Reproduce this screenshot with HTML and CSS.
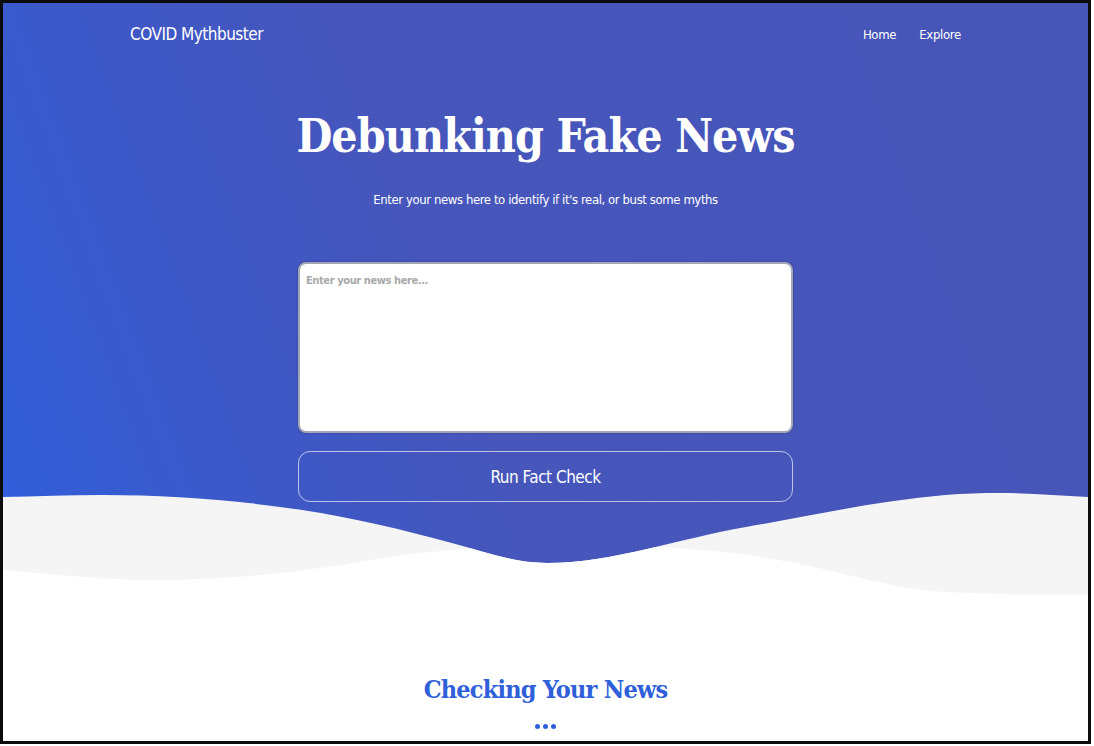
FILE: index.html
```html
<!DOCTYPE html>
<html lang="en">
<head>
<meta charset="utf-8">
<title>COVID Mythbuster</title>
<link rel="stylesheet" href="styles.css">
</head>
<body>
<div class="frame">
  <header class="hero">
    <nav class="nav">
      <a class="brand" href="#">COVID Mythbuster</a>
      <div class="links">
        <a href="#">Home</a>
        <a href="#">Explore</a>
      </div>
    </nav>
    <h1 class="title">Debunking Fake News</h1>
    <p class="subtitle">Enter your news here to identify if it's real, or bust some myths</p>
    <textarea class="news" placeholder="Enter your news here..."></textarea>
    <button class="run">Run Fact Check</button>
    <svg class="wave" viewBox="0 0 1088 110" preserveAspectRatio="none" aria-hidden="true">
      <defs>
        <clipPath id="belowBlue">
          <path d="M0,7 C33.3,6.3 66.7,5 100,5 C166.7,5 233.3,10 300,20 C350,27.5 400,39.5 450,53 C481.7,61.6 513.3,73 545,73 C611.7,73 678.3,48.3 745,37 C811.7,25.7 878.3,10.3 945,5 C963.3,3.5 981.7,3 1000,3 C1029.3,3 1058.7,5.5 1088,7 L1088,110 L0,110 Z"/>
        </clipPath>
      </defs>
      <path fill="#f5f5f5" d="M0,7 C33.3,6.3 66.7,5 100,5 C166.7,5 233.3,10 300,20 C350,27.5 400,39.5 450,53 C481.7,61.6 513.3,73 545,73 C611.7,73 678.3,48.3 745,37 C811.7,25.7 878.3,10.3 945,5 C963.3,3.5 981.7,3 1000,3 C1029.3,3 1058.7,5.5 1088,7 L1088,110 L0,110 Z"/>
      <path fill="#ffffff" clip-path="url(#belowBlue)" d="M0,80 C50,84 100,90 150,90 C216.7,90 283.3,84.3 350,73 C419,61.3 488,55 557,55 C636,55 715,57.2 794,73 C844,83 894,98.5 944,102 C992,104.5 1040,105 1088,105 L1088,110 L0,110 Z"/>
    </svg>
  </header>
  <section class="checking">
    <h2 class="checking-title">Checking Your News</h2>
    <div class="dots"><span></span><span></span><span></span></div>
  </section>
</div>
</body>
</html>
```

FILE: styles.css
```css
html, body {
  margin: 0;
  padding: 0;
  background: #ffffff;
}

.frame {
  width: 1085px;
  height: 738px;
  border: 3px solid #0b0b0b;
  overflow: hidden;
  background: #ffffff;
  font-family: "DejaVu Sans Condensed", "DejaVu Sans", sans-serif;
}

.hero {
  position: relative;
  height: 597px;
  display: flex;
  flex-direction: column;
  align-items: center;
  background: linear-gradient(70deg, #2f5fdc 0%, #3d58c8 22%, #4656bb 42%, #4755b8 100%);
  color: #ffffff;
}

.nav {
  width: 831px;
  height: 62px;
  display: flex;
  align-items: center;
  justify-content: space-between;
}

.nav a {
  color: #ffffff;
  text-decoration: none;
}

.brand {
  font-size: 17px;
  letter-spacing: -0.5px;
}

.links {
  display: flex;
  gap: 23px;
  font-size: 13px;
  letter-spacing: -0.3px;
}

.title {
  margin: 39px 0 0;
  font-family: "DejaVu Serif Condensed", "DejaVu Serif", serif;
  font-weight: bold;
  font-size: 46px;
  line-height: 64px;
  letter-spacing: -0.9px;
}

.subtitle {
  margin: 22px 0 0;
  font-size: 13px;
  line-height: 20px;
  letter-spacing: -0.4px;
}

.news {
  margin-top: 52px;
  box-sizing: border-box;
  width: 495px;
  height: 171px;
  padding: 10px 6px;
  border: 2px solid #a3a6b6;
  border-radius: 8px;
  background: #ffffff;
  box-shadow: 0 0 2px rgba(0, 0, 0, 0.35);
  resize: none;
  font-family: inherit;
  font-size: 11px;
  font-weight: bold;
  letter-spacing: -0.4px;
  color: #333;
  outline: none;
}

.news::placeholder {
  color: #a9a9a9;
}

.run {
  margin-top: 18px;
  box-sizing: border-box;
  width: 495px;
  height: 51px;
  border: 1px solid rgba(255, 255, 255, 0.65);
  border-radius: 12px;
  background: transparent;
  color: #ffffff;
  font-family: inherit;
  font-size: 17px;
  letter-spacing: -0.5px;
  cursor: pointer;
}

.wave {
  position: absolute;
  left: 0;
  bottom: 0;
  width: 100%;
  height: 110px;
  display: block;
}

.checking {
  display: flex;
  flex-direction: column;
  align-items: center;
  padding-top: 72px;
}

.checking-title {
  margin: 0;
  font-family: "DejaVu Serif Condensed", "DejaVu Serif", serif;
  font-weight: bold;
  font-size: 25px;
  line-height: 36px;
  color: #2f60da;
  letter-spacing: -0.8px;
}

.dots {
  margin-top: 16px;
  display: flex;
  gap: 3px;
}

.dots span {
  width: 5px;
  height: 5px;
  border-radius: 50%;
  background: #2f60da;
}
```
